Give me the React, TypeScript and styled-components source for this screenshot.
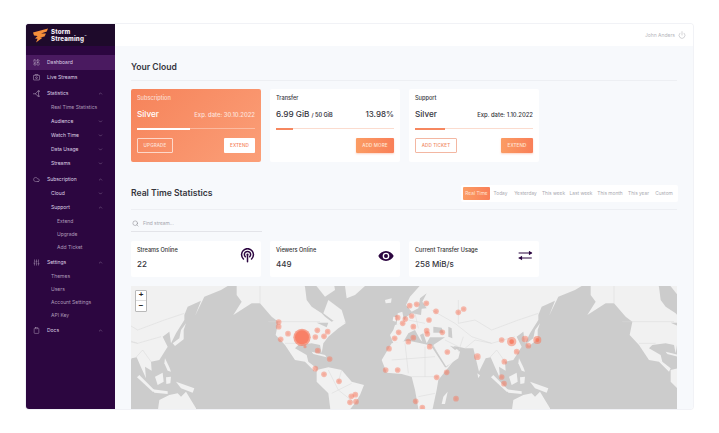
import React from "react";
import styled, { createGlobalStyle } from "styled-components";
import {
  ChevronDown,
  ChevronUp,
  Clipboard,
  Cloud,
  LayoutDashboard,
  Power,
  Search,
  SlidersVertical,
} from "lucide-react";

const Global = createGlobalStyle`
  html, body { margin: 0; padding: 0; background: #fff; }
  body { font-family: Inter, "Noto Sans", sans-serif; color: #333; }
  * { box-sizing: border-box; }
`;

const Page = styled.div`
  width: 719px;
  height: 433px;
  padding: 24px 26px;
`;
const Frame = styled.div`
  width: 667px;
  height: 385px;
  display: flex;
  border-radius: 3px;
  overflow: hidden;
  box-shadow: 0 0 0 1px #f1f2f6;
`;
const Sidebar = styled.aside`
  width: 89px;
  flex: none;
  background: #2c0640;
  display: flex;
  flex-direction: column;
`;
const Brand = styled.div`
  height: 22px;
  background: #1e0a2b;
  display: flex;
  align-items: center;
  gap: 3px;
  padding-left: 7px;
  margin-bottom: 8.5px;
`;
const BrandText = styled.div`
  font-size: 6.2px;
  line-height: 7px;
  font-weight: 800;
  color: #f4eef6;
  letter-spacing: 0.15px;
`;
const BrandLine = styled.div`
  height: 7px;
  white-space: nowrap;
  display: flex;
  align-items: flex-start;
`;
const Tm = styled.span`
  font-size: 3px;
  line-height: 4px;
  margin-left: 0.5px;
`;
const Row = styled.div<{ $level: number; $active?: boolean; $bright?: boolean; $h: number; $mt: number }>`
  height: ${(p) => p.$h}px;
  margin-top: ${(p) => p.$mt}px;
  display: flex;
  align-items: center;
  padding-left: ${(p) => (p.$level === 0 ? 7 : p.$level === 1 ? 25 : 31)}px;
  padding-right: 12px;
  background: ${(p) => (p.$active ? "#4a1a60" : "transparent")};
  color: ${(p) => (p.$bright ? "#dfd3e6" : "#ad9ab7")};
  font-size: 5px;
  line-height: 1;
  svg.lead { width: 7px; height: 7px; margin-right: 7px; flex: none; color: #c3b4cb; }
  span { flex: 1; white-space: nowrap; }
  svg.chev { width: 5px; height: 5px; flex: none; color: #a08cab; }
`;
const Main = styled.main`
  flex: 1;
  background: #f7f9fc;
  display: flex;
  flex-direction: column;
  min-width: 0;
`;
const TopBar = styled.header`
  height: 22px;
  flex: none;
  background: #fff;
  display: flex;
  align-items: center;
  justify-content: flex-end;
  gap: 3px;
  padding-right: 7px;
  font-size: 5px;
  color: #b5b5bb;
  svg { width: 8px; height: 8px; color: #a9a9ae; }
`;
const Content = styled.div`
  padding: 0 16px;
  display: flex;
  flex-direction: column;
  flex: 1;
  min-height: 0;
`;
const SectionHead = styled.div<{ $h: number; $pt: number }>`
  height: ${(p) => p.$h}px;
  padding-top: ${(p) => p.$pt}px;
  display: flex;
  align-items: center;
  justify-content: space-between;
  border-bottom: 1px solid #edeff3;
  flex: none;
`;
const Title = styled.h2`
  margin: 0;
  font-size: 8.6px;
  font-weight: 600;
  color: #35353d;
`;
const Cards = styled.div<{ $h: number; $mt: number }>`
  display: grid;
  grid-template-columns: repeat(3, 130px);
  column-gap: 9px;
  height: ${(p) => p.$h}px;
  margin-top: ${(p) => p.$mt}px;
  flex: none;
`;
const Card = styled.div<{ $hot?: boolean }>`
  background: ${(p) => (p.$hot ? "linear-gradient(135deg, #f6835a 0%, #fb9f78 100%)" : "#fff")};
  color: ${(p) => (p.$hot ? "#fff" : "#35353d")};
  border-radius: 2px;
  padding: 6px 6px 9px;
  display: flex;
  flex-direction: column;
`;
const Label = styled.div<{ $hot?: boolean }>`
  font-size: 5.6px;
  line-height: 6px;
  font-weight: 500;
  white-space: nowrap;
  opacity: ${(p) => (p.$hot ? 0.7 : 1)};
`;
const Line = styled.div`
  display: flex;
  align-items: baseline;
  justify-content: space-between;
  margin-top: 7.5px;
  height: 11px;
`;
const Big = styled.div`
  font-size: 8.2px;
  font-weight: 500;
  white-space: nowrap;
  small { font-size: 5.5px; font-weight: 600; }
`;
const Side = styled.div<{ $size: number; $hot?: boolean }>`
  font-size: ${(p) => p.$size}px;
  font-weight: 500;
  opacity: ${(p) => (p.$hot ? 0.75 : 1)};
`;
const Track = styled.div<{ $hot?: boolean }>`
  height: 1px;
  margin-top: 8.5px;
  background: ${(p) => (p.$hot ? "rgba(255,255,255,.35)" : "#fbdccf")};
  position: relative;
`;
const Fill = styled.div<{ $hot?: boolean }>`
  height: 1.5px;
  background: ${(p) => (p.$hot ? "#fff" : "#f6875f")};
`;
const Actions = styled.div`
  display: flex;
  justify-content: space-between;
  align-items: flex-end;
  margin-top: auto;
`;
const Btn = styled.div<{ $kind: "ghost" | "white" | "line" | "fill"; $w: number }>`
  width: ${(p) => p.$w}px;
  height: 15px;
  border-radius: 1px;
  display: flex;
  align-items: center;
  justify-content: center;
  font-size: 4.6px;
  font-weight: 500;
  letter-spacing: 0.1px;
  ${(p) =>
    p.$kind === "ghost"
      ? "border:1px solid rgba(255,255,255,.65);color:rgba(255,255,255,.75);"
      : p.$kind === "white"
        ? "background:#fff;color:#f6835a;"
        : p.$kind === "line"
          ? "border:1px solid #f3b7a2;color:#f08a66;background:#fff;"
          : "background:linear-gradient(90deg,#fb9c63,#f97f58);color:#ffe6d8;box-shadow:0 1px 2px rgba(246,130,90,.35);"}
`;
const Tabs = styled.div`
  width: 217px;
  height: 17px;
  background: #fff;
  border-radius: 2px;
  padding: 2px;
  display: flex;
  align-items: center;
  margin-right: -1px;
`;
const Tab = styled.div<{ $active?: boolean; $w: number }>`
  width: ${(p) => p.$w}px;
  height: 13px;
  flex: none;
  display: flex;
  align-items: center;
  justify-content: center;
  white-space: nowrap;
  font-size: 4.8px;
  border-radius: 1px;
  color: ${(p) => (p.$active ? "#ffe3d4" : "#a9a9b0")};
  background: ${(p) => (p.$active ? "linear-gradient(90deg,#fb9c63,#f97f58)" : "transparent")};
`;
const SearchBox = styled.div`
  width: 131px;
  height: 14px;
  margin-top: 7.5px;
  flex: none;
  border-bottom: 1.5px solid #e3e4e9;
  display: flex;
  align-items: center;
  gap: 4px;
  padding-left: 1px;
  padding-bottom: 2px;
  font-size: 4.8px;
  color: #a4a4ac;
  svg { width: 7px; height: 7px; color: #77777f; }
`;
const StatCard = styled.div`
  background: #fff;
  border-radius: 2px;
  padding: 6px 6px 0;
  display: flex;
  justify-content: space-between;
`;
const Stat = styled.div`
  display: flex;
  flex-direction: column;
`;
const StatValue = styled.div`
  font-size: 8px;
  font-weight: 500;
  margin-top: 6px;
  color: #35353d;
`;
const IconWrap = styled.div<{ $size: number }>`
  width: ${(p) => p.$size}px;
  height: ${(p) => p.$size}px;
  margin-top: 1px;
  color: #2c0640;
  svg { width: 100%; height: 100%; display: block; }
`;
const MapBox = styled.div`
  margin-top: 9px;
  height: 123px;
  flex: none;
  background: #cdcdcd;
  position: relative;
  overflow: hidden;
  svg { display: block; }
`;
const Zoom = styled.div`
  position: absolute;
  left: 4px;
  top: 4px;
  width: 12px;
  height: 22px;
  border: 1px solid #b9b9b9;
  background: #fff;
  border-radius: 1px;
  display: flex;
  flex-direction: column;
`;
const ZoomBtn = styled.div`
  flex: 1;
  display: flex;
  align-items: center;
  justify-content: center;
  font: 700 8px/1 "Liberation Sans", sans-serif;
  color: #222;
  & + & { border-top: 1px solid #ddd; }
`;

const StatsGlyph: React.FC<{ className?: string }> = ({ className }) => (
  <svg className={className} viewBox="0 0 24 24" fill="none" stroke="currentColor" strokeWidth="1.8" strokeLinecap="round">
    <path d="M1 13h7l8-8M8 13l8 7" />
    <circle cx="19" cy="4" r="2.4" />
    <circle cx="19" cy="21" r="2" />
    <path d="M19 9v7" />
  </svg>
);
const LiveGlyph: React.FC<{ className?: string }> = ({ className }) => (
  <svg className={className} viewBox="0 0 24 24" fill="none" stroke="currentColor" strokeWidth="1.8">
    <rect x="1.5" y="4.5" width="21" height="16" rx="1.5" />
    <circle cx="12" cy="12.5" r="3" />
    <path d="M5 4.5l2-2.5h10l2 2.5" />
  </svg>
);

type Item = { t: string; l: number; h: number; mt?: number; icon?: React.ElementType; chev?: "u" | "d"; active?: boolean; bright?: boolean };
const nav: Item[] = [
  { t: "Dashboard", l: 0, h: 15, icon: LayoutDashboard, active: true },
  { t: "Live Streams", l: 0, h: 15, icon: LiveGlyph, bright: true },
  { t: "Statistics", l: 0, h: 15, mt: 1, icon: StatsGlyph, chev: "u", bright: true },
  { t: "Real Time Statistics", l: 1, h: 14 },
  { t: "Audience", l: 1, h: 14, chev: "d", bright: true },
  { t: "Watch Time", l: 1, h: 14, chev: "d", bright: true },
  { t: "Data Usage", l: 1, h: 14, chev: "d", bright: true },
  { t: "Streams", l: 1, h: 14, chev: "d", bright: true },
  { t: "Subscription", l: 0, h: 15, mt: 1, icon: Cloud, chev: "u", bright: true },
  { t: "Cloud", l: 1, h: 14, chev: "d", bright: true },
  { t: "Support", l: 1, h: 14, chev: "u", bright: true },
  { t: "Extend", l: 2, h: 13 },
  { t: "Upgrade", l: 2, h: 13 },
  { t: "Add Ticket", l: 2, h: 13 },
  { t: "Settings", l: 0, h: 15, mt: 1, icon: SlidersVertical, chev: "u", bright: true },
  { t: "Themes", l: 1, h: 13 },
  { t: "Users", l: 1, h: 13 },
  { t: "Account Settings", l: 1, h: 13 },
  { t: "API Key", l: 1, h: 13 },
  { t: "Docs", l: 0, h: 15, mt: 1, icon: Clipboard, chev: "u", bright: true },
];

const tabs: [string, number][] = [
  ["Real Time", 27], ["Today", 21], ["Yesterday", 29], ["This week", 27], ["Last week", 28],
  ["This month", 30], ["This year", 27], ["Custom", 24],
];

const OCEAN = "#cccccc";

const World = () => (
  <>
    <g fill="#f1f1f1">
      <path d="M900 0 L855 50 L843 75 L860 95 L880 85 L885 55 L905 40 L892 65 L905 85 L890 86 L888 105 L860 100 L845 110 L830 130 L810 135 L805 150 L795 165 L805 190 L835 185 L850 160 L870 150 L885 178 L892 185 L885 165 L895 160 L905 190 L915 172 L960 172 L925 195 L930 205 L960 262 L1000 235 L1005 215 L985 198 L1000 200 L1020 205 L1045 205 L1062 275 L1082 235 L1097 232 L1110 262 L1125 295 L1122 260 L1142 272 L1140 245 L1165 240 L1190 200 L1175 170 L1195 155 L1200 190 L1215 160 L1240 120 L1240 105 L1250 80 L1290 62 L1272 108 L1300 50 L1350 30 L1400 0 Z" />
      <path d="M800 190 L770 240 L785 278 L830 282 L860 290 L870 330 L880 386 L895 420 L920 400 L935 330 L940 300 L1000 225 L965 262 L945 230 L925 198 L880 188 L850 182 L825 185 Z" />
      <path d="M335 0 L335 45 L350 65 L325 105 L380 70 L405 70 L440 110 L460 125 L452 165 L480 195 L510 240 L540 245 L570 275 L575 265 L550 245 L545 225 L510 205 L520 195 L560 190 L585 195 L590 220 L595 190 L610 170 L640 145 L662 130 L640 115 L620 125 L600 110 L590 100 L560 80 L545 60 L540 20 L530 0 Z" />
      <path d="M595 100 L610 60 L650 90 L662 128 L625 122 Z" />
      <path d="M660 18 L665 55 L690 45 L720 18 L720 0 L660 0 Z" />
      <path d="M560 0 L600 50 L630 30 L625 0 Z" />
      <path d="M650 0 L680 0 L665 15 Z" />
      <path d="M575 270 L610 262 L650 270 L680 305 L717 315 L705 345 L690 370 L665 400 L650 440 L620 420 L610 340 L575 305 Z" />
      <path d="M818 100 L832 95 L838 128 L815 135 Z" />
      <path d="M805 110 L815 112 L812 125 L803 122 Z" />
      <path d="M955 350 L968 335 L960 372 L950 372 Z" />
      <path d="M1160 395 L1165 360 L1195 345 L1220 340 L1230 350 L1245 335 L1275 385 L1280 420 L1170 420 Z" />
      <path d="M1245 130 L1238 150 L1238 178 L1212 198 L1205 190 L1225 175 L1230 150 Z" />
      <path d="M1105 285 L1155 335 L1145 335 L1098 292 Z" />
      <path d="M1145 328 L1190 334 L1190 342 L1150 338 Z" />
      <path d="M1152 290 L1175 278 L1178 305 L1160 315 Z" />
      <path d="M1185 292 L1200 290 L1198 310 L1186 312 Z" />
      <path d="M1215 305 L1270 325 L1265 338 L1230 325 Z" />
      <path d="M1182 235 L1195 262 L1200 275 L1190 272 L1180 250 Z" />
      <path d="M1057 280 L1065 286 L1060 295 Z" />
      <path d="M560 215 L600 225 L605 232 L565 222 Z" />
      <path d="M780 60 L800 55 L798 68 L782 70 Z" />
    </g>
    <g fill={OCEAN}>
      <path d="M925 140 L950 143 L955 158 L925 158 Z" />
      <path d="M970 140 L980 145 L982 175 L970 170 Z" />
      <path d="M975 197 L1000 205 L990 210 Z" />
      <path d="M575 128 L610 128 L605 142 L590 135 Z" />
      <path d="M925 198 L965 262 L960 262 L920 200 Z" />
    </g>
  </>
);

const Borders = () => (
  <g fill="none" stroke="#d9d9d9" strokeWidth="1.5">
    <path d="M1000 60 L1000 130 L1050 120 L1100 150 L1180 120 L1240 100 M920 90 L990 130 L1040 170 L1100 190 L1170 170 M1020 205 L1050 180 L1100 190 M800 240 L930 230 M840 190 L850 280 M900 200 L900 290 M860 290 L940 290 M880 350 L930 340 M1000 215 L1015 170 M960 180 L1000 200 M870 100 L880 145 M850 120 L900 130 M1140 245 L1115 210 L1095 232" />
    <path d="M430 125 L585 125 M480 190 L530 190 M610 270 L640 330 L690 370 M620 340 L680 310 M405 70 L405 18 M650 270 L640 305" />
  </g>
);

const dots: [number, number, number?][] = [
  [461,126],[461,140],[489,161],[467,178],[577,151],[571,171],[597,169],[608,155],[540,200,5],[578,212],[614,237],[571,266],[597,283],[642,304],[679,349],[691,344],[675,367],[693,365],[792,206],[782,270],[818,270],[809,175],[821,157],[818,113],[833,130],[841,117],[860,108],[854,77],[850,185],[865,140],[865,173],
  [875,73],[904,70],[933,94],[1000,97],[1016,87],[912,120],[905,152],[907,162],[952,157],[914,200],[967,216],[1057,230,10],[1130,180],[1200,177,10],[1210,197],[1175,215],[1138,245],[1130,291],[1137,311],[993,356],[965,277],[935,292],[872,364],[892,383],
];

const WorldMap = () => (
  <svg width="546" height="123" viewBox="18 18 1638 369" aria-label="World map">
    <rect x="18" y="18" width="1638" height="369" fill={OCEAN} />
    <World />
    <g transform="translate(-1062 0)"><World /></g>
    <g transform="translate(1062 0)"><World /></g>
    <Borders />
    <g transform="translate(-1062 0)"><Borders /></g>
    <g transform="translate(1062 0)"><Borders /></g>
    <g fill="#f8765a">
      {dots.map(([x, y, r], i) => (
        <React.Fragment key={i}>
          <circle cx={x} cy={y} r={r ?? 8.5} fillOpacity="0.45" />
          <circle cx={x} cy={y} r={(r ?? 8.5) * 0.55} fillOpacity="0.2" />
        </React.Fragment>
      ))}
      <circle cx="531" cy="172" r="26" fillOpacity="0.65" />
      <circle cx="531" cy="172" r="21" fillOpacity="0.75" />
      <circle cx="1160" cy="185" r="14" fillOpacity="0.5" />
      <circle cx="1160" cy="185" r="7" fillOpacity="0.8" />
      <circle cx="1237" cy="180" r="12" fillOpacity="0.55" />
      <circle cx="1237" cy="180" r="6" fillOpacity="0.8" />
    </g>
  </svg>
);

const PodcastIcon = () => (
  <svg viewBox="0 0 24 24" fill="none" stroke="currentColor" strokeWidth="2.4" strokeLinecap="round">
    <path d="M5.5 17.5a9.5 9.5 0 1 1 13 0" />
    <path d="M8.5 14a5 5 0 1 1 7 0" />
    <circle cx="12" cy="10.5" r="1.8" fill="currentColor" stroke="none" />
    <path d="M12 12v10" />
  </svg>
);
const EyeIcon = () => (
  <svg viewBox="0 0 24 24">
    <path fill="currentColor" fillRule="evenodd" d="M12 4.5C6.8 4.5 2.4 7.7 0.5 12c1.9 4.3 6.3 7.5 11.5 7.5s9.6-3.2 11.5-7.5C21.6 7.7 17.2 4.5 12 4.5zM12 17a5 5 0 1 1 0-10 5 5 0 0 1 0 10zm0-8a3 3 0 1 0 0 6 3 3 0 0 0 0-6z" />
  </svg>
);
const SwapIcon = () => (
  <svg viewBox="0 0 24 24" fill="none" stroke="currentColor" strokeWidth="1.8">
    <path d="M1 8h21M1 16h21" />
    <path d="M17.5 4.5 23 8l-5.5 3.5z" fill="currentColor" stroke="none" />
    <path d="M6.5 12.5 1 16l5.5 3.5z" fill="currentColor" stroke="none" />
  </svg>
);
const Swoosh = () => (
  <svg width="15" height="15" viewBox="0 0 15 15" aria-label="Storm Streaming logo">
    <path fill="#f58f3a" d="M0 4.6 L15 0.5 L13.8 3.6 L8 5.4 L13 5.6 L11.5 8.4 L7 9.6 L9.5 9.8 L3 14.5 L4.6 10.8 L2 10.4 L4.6 8 L1 7.6 Z" />
  </svg>
);

export default function App() {
  return (
    <Page>
      <Global />
      <Frame>
        <Sidebar>
          <Brand>
            <Swoosh />
            <BrandText>
              <BrandLine>Storm</BrandLine>
              <BrandLine>Streaming<Tm>™</Tm></BrandLine>
            </BrandText>
          </Brand>
          {nav.map((n) => {
            const Ic = n.icon;
            return (
              <Row key={n.t} $level={n.l} $h={n.h} $mt={n.mt ?? 0} $active={n.active} $bright={n.bright || n.active}>
                {Ic && <Ic className="lead" strokeWidth={1.5} />}
                <span>{n.t}</span>
                {n.chev === "u" && <ChevronUp className="chev" />}
                {n.chev === "d" && <ChevronDown className="chev" />}
              </Row>
            );
          })}
        </Sidebar>
        <Main>
          <TopBar>
            John Anders
            <Power strokeWidth={1.5} />
          </TopBar>
          <Content>
            <SectionHead $h={35} $pt={7}>
              <Title>Your Cloud</Title>
            </SectionHead>
            <Cards $h={73} $mt={8}>
              <Card $hot>
                <Label $hot>Subscription</Label>
                <Line>
                  <Big>Silver</Big>
                  <Side $size={5.9} $hot>Exp. date: 30.10.2022</Side>
                </Line>
                <Track $hot><Fill $hot style={{ width: "45%" }} /></Track>
                <Actions>
                  <Btn $kind="ghost" $w={36}>UPGRADE</Btn>
                  <Btn $kind="white" $w={31}>EXTEND</Btn>
                </Actions>
              </Card>
              <Card>
                <Label>Transfer</Label>
                <Line>
                  <Big>6.99 GiB <small>/ 50 GiB</small></Big>
                  <Side $size={8}>13.98%</Side>
                </Line>
                <Track><Fill style={{ width: "14%" }} /></Track>
                <Actions>
                  <span />
                  <Btn $kind="fill" $w={38}>ADD MORE</Btn>
                </Actions>
              </Card>
              <Card>
                <Label>Support</Label>
                <Line>
                  <Big>Silver</Big>
                  <Side $size={5.9}>Exp. date: 1.10.2022</Side>
                </Line>
                <Track><Fill style={{ width: "25%" }} /></Track>
                <Actions>
                  <Btn $kind="line" $w={42}>ADD TICKET</Btn>
                  <Btn $kind="fill" $w={32}>EXTEND</Btn>
                </Actions>
              </Card>
            </Cards>
            <SectionHead $h={48} $pt={15}>
              <Title>Real Time Statistics</Title>
              <Tabs>
                {tabs.map(([t, w], i) => (
                  <Tab key={t} $w={w} $active={i === 0}>{t}</Tab>
                ))}
              </Tabs>
            </SectionHead>
            <SearchBox>
              <Search strokeWidth={1.5} />
              Find stream...
            </SearchBox>
            <Cards $h={36} $mt={9}>
              <StatCard>
                <Stat><Label>Streams Online</Label><StatValue>22</StatValue></Stat>
                <IconWrap $size={15}><PodcastIcon /></IconWrap>
              </StatCard>
              <StatCard>
                <Stat><Label>Viewers Online</Label><StatValue>449</StatValue></Stat>
                <IconWrap $size={16}><EyeIcon /></IconWrap>
              </StatCard>
              <StatCard>
                <Stat><Label>Current Transfer Usage</Label><StatValue>258 MiB/s</StatValue></Stat>
                <IconWrap $size={15}><SwapIcon /></IconWrap>
              </StatCard>
            </Cards>
            <MapBox>
              <WorldMap />
              <Zoom>
                <ZoomBtn>+</ZoomBtn>
                <ZoomBtn>−</ZoomBtn>
              </Zoom>
            </MapBox>
          </Content>
        </Main>
      </Frame>
    </Page>
  );
}
